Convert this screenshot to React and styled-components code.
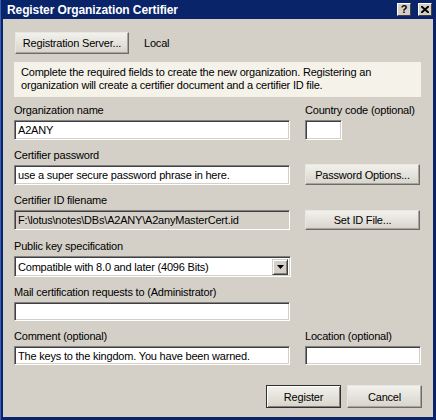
import React from 'react';
import styled, { createGlobalStyle } from 'styled-components';

const GlobalStyle = createGlobalStyle`
  html, body {
    margin: 0;
    padding: 0;
    background: #d4d0c8;
  }
  body {
    font-family: "Liberation Sans", Arial, sans-serif;
    font-size: 11px;
    letter-spacing: -0.2px;
    color: #000;
  }
`

const Frame = styled.div`
  width: 436px;
  height: 420px;
  box-sizing: border-box;
  background: #0a246a;
  border-left: 1px solid #3a5fb8;
  padding: 0 3px 3px 2px;
  display: flex;
  flex-direction: column;
`

const TitleBar = styled.div`
  height: 19px;
  flex: none;
  display: flex;
  align-items: center;
  padding-left: 4px;
  padding-right: 1px;
`

const Title = styled.div`
  flex: 1;
  color: #fff;
  font-weight: bold;
  font-size: 12px;
  letter-spacing: -0.1px;
`

const CaptionButton = styled.div`
  width: 14px;
  height: 13px;
  margin-left: ${props => props.gap || 0}px;
  box-sizing: border-box;
  background: #d4d0c8;
  border: 1px solid;
  border-color: #fff #404040 #404040 #fff;
  display: flex;
  align-items: center;
  justify-content: center;
  font-weight: bold;
  font-size: 11px;
  line-height: 1;
  color: #000;
`

const Body = styled.div`
  flex: 1;
  background: #d4d0c8;
  padding: 13px 12px 0 11px;
  display: flex;
  flex-direction: column;
`

const ServerRow = styled.div`
  display: flex;
  align-items: center;
  gap: 15px;
  padding-left: 1px;
`

const Button = styled.div`
  box-sizing: border-box;
  width: ${props => props.w}px;
  height: ${props => props.h || 22}px;
  display: flex;
  align-items: center;
  justify-content: center;
  background: linear-gradient(#f2f1ec, #d8d4cc);
  border: 1px solid;
  border-color: ${props => props.primary ? '#303030' : '#e8e6e0 #6e6c66 #6e6c66 #e8e6e0'};
  box-shadow: ${props => props.primary
    ? 'inset 1px 1px 0 #fff, inset -1px -1px 0 #808080'
    : 'inset -1px -1px 0 #a8a59e'};
  font-size: 11px;
  white-space: nowrap;
`

const InfoBox = styled.div`
  margin-top: 8px;
  height: 35px;
  box-sizing: border-box;
  background: #f5f2ea;
  padding: 4px 7px;
  line-height: 13px;
  font-size: 11px;
`

const Grid = styled.div`
  display: grid;
  grid-template-columns: 276px 116px;
  column-gap: 15px;
  row-gap: 8px;
  align-items: end;
  margin-top: 6px;
`

const Field = styled.div`
  display: flex;
  flex-direction: column;
  margin-top: ${props => props.mt || 0}px;
`

const Label = styled.div`
  line-height: 14px;
  margin-bottom: 3px;
  white-space: nowrap;
`

const Input = styled.div`
  box-sizing: border-box;
  width: ${props => props.w ? props.w + 'px' : '100%'};
  height: ${props => props.h || 20}px;
  background: ${props => props.disabled ? '#d4d0c8' : '#fff'};
  border: 1px solid;
  border-color: #808080 #fff #fff #808080;
  box-shadow: inset 1px 1px 0 #404040, inset -1px -1px 0 #d4d0c8;
  padding: 0 3px;
  display: flex;
  align-items: center;
  white-space: nowrap;
  overflow: hidden;
  font-size: 11px;
`

const Select = styled(Input)`
  height: 21px;
  width: 277px;
  padding-right: 2px;
  justify-content: space-between;
`

const DropButton = styled.div`
  width: 16px;
  height: 16px;
  box-sizing: border-box;
  background: #d4d0c8;
  border: 1px solid;
  border-color: #d4d0c8 #404040 #404040 #d4d0c8;
  box-shadow: inset 1px 1px 0 #fff, inset -1px -1px 0 #808080;
  display: flex;
  align-items: center;
  justify-content: center;
`

const Footer = styled.div`
  margin-top: 20px;
  display: flex;
  justify-content: flex-end;
  gap: 6px;
  margin-right: -1px;
`

const App = () => {
  return (
    <>
      <GlobalStyle />
      <Frame>
        <TitleBar>
          <Title>Register Organization Certifier</Title>
          <CaptionButton>?</CaptionButton>
          <CaptionButton gap={7}>
            <svg width="8" height="7" viewBox="0 0 8 7">
              <path d="M0 0 L8 7 M8 0 L0 7" stroke="#000" strokeWidth="2" />
            </svg>
          </CaptionButton>
        </TitleBar>
        <Body>
          <ServerRow>
            <Button w={114}>Registration Server...</Button>
            <span>Local</span>
          </ServerRow>
          <InfoBox>
            Complete the required fields to create the new organization. Registering an<br />
            organization will create a certifier document and a certifier ID file.
          </InfoBox>
          <Grid>
            <Field>
              <Label>Organization name</Label>
              <Input>A2ANY</Input>
            </Field>
            <Field>
              <Label>Country code (optional)</Label>
              <Input w={37} />
            </Field>

            <Field>
              <Label>Certifier password</Label>
              <Input>use a super secure password phrase in here.</Input>
            </Field>
            <Button w={115} h={21}>Password Options...</Button>

            <Field>
              <Label>Certifier ID filename</Label>
              <Input disabled>F:\lotus\notes\DBs\A2ANY\A2anyMasterCert.id</Input>
            </Field>
            <Button w={115} h={20}>Set ID File...</Button>

            <Field mt={1}>
              <Label>Public key specification</Label>
              <Select>
                <span>Compatible with 8.0 and later (4096 Bits)</span>
                <DropButton>
                  <svg width="7" height="4" viewBox="0 0 7 4">
                    <path d="M0 0 H7 L3.5 4 Z" fill="#000" />
                  </svg>
                </DropButton>
              </Select>
            </Field>
            <div />

            <Field>
              <Label>Mail certification requests to (Administrator)</Label>
              <Input h={19} />
            </Field>
            <div />

            <Field>
              <Label>Comment (optional)</Label>
              <Input h={19}>The keys to the kingdom. You have been warned.</Input>
            </Field>
            <Field>
              <Label>Location (optional)</Label>
              <Input h={19} />
            </Field>
          </Grid>
          <Footer>
            <Button w={75} h={23} primary>Register</Button>
            <Button w={75} h={23}>Cancel</Button>
          </Footer>
        </Body>
      </Frame>
    </>
  );
}

export default App
